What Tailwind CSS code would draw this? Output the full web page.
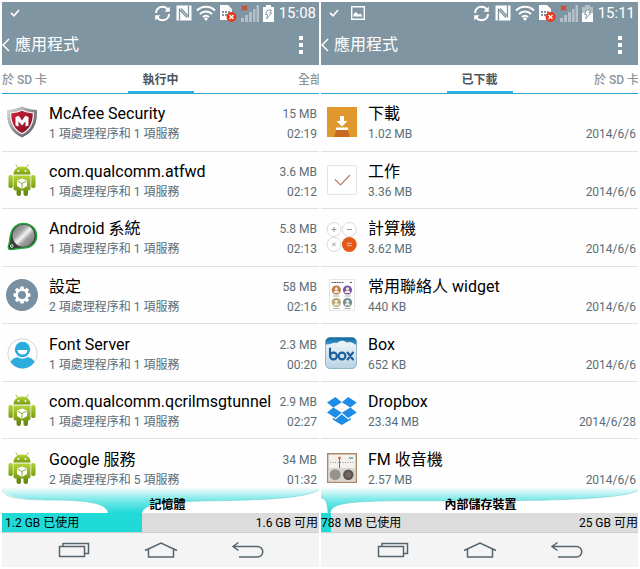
<!DOCTYPE html>
<html lang="zh-Hant">
<head>
<meta charset="utf-8">
<meta name="viewport" content="width=device-width, initial-scale=1">
<title>應用程式</title>
<script src="https://cdn.jsdelivr.net/npm/@tailwindcss/browser@4"></script>
</head>
<body class="bg-white font-[Roboto,'Noto_Sans_CJK_TC',sans-serif] text-black">

<svg class="absolute size-0" aria-hidden="true">
  <defs>
    <linearGradient id="gGreen" x1="0" y1="0" x2="0" y2="1"><stop offset="0" stop-color="#b5d438"/><stop offset="1" stop-color="#769c12"/></linearGradient>
    <linearGradient id="gSilver" x1="0" y1="0" x2="1" y2="1"><stop offset="0" stop-color="#e4e4e6"/><stop offset=".5" stop-color="#8a8b90"/><stop offset="1" stop-color="#55565b"/></linearGradient>
    <linearGradient id="gRed" x1="0" y1="0" x2="1" y2="1"><stop offset="0" stop-color="#d0213c"/><stop offset="1" stop-color="#7d0f22"/></linearGradient>
    <linearGradient id="gSteel" x1="0" y1="0" x2="1" y2="1"><stop offset="0" stop-color="#6c6c6c"/><stop offset=".35" stop-color="#a6a6a6"/><stop offset=".5" stop-color="#f4f4f4"/><stop offset=".65" stop-color="#a0a0a0"/><stop offset="1" stop-color="#6a6a6a"/></linearGradient>
    <linearGradient id="gBox" x1="0" y1="0" x2="0" y2="1"><stop offset="0" stop-color="#f4f9fc"/><stop offset="1" stop-color="#b9d3e3"/></linearGradient>
    <linearGradient id="gSky" x1="0" y1="0" x2="0" y2="1"><stop offset="0" stop-color="#12679f"/><stop offset="1" stop-color="#3c9dd0"/></linearGradient>
    <linearGradient id="gWave" x1="0" y1="0" x2="0" y2="1"><stop offset="0" stop-color="#20dad8" stop-opacity="0"/><stop offset=".5" stop-color="#20dad8" stop-opacity=".6"/><stop offset="1" stop-color="#20dad8"/></linearGradient>
  </defs>
  <symbol id="android" viewBox="0 0 32 32">
    <path d="M11.500 3.500 10 1M20.500 3.500 22 1" stroke="#9bbd2c" stroke-width="1" stroke-linecap="round"/>
    <path d="M7.500 10.500C7.500 5.500 11 2.500 16 2.500s8.500 3 8.500 8z" fill="url(#gGreen)"/>
    <circle cx="12.500" cy="7" r=".9" fill="#fff"/><circle cx="19.500" cy="7" r=".9" fill="#fff"/>
    <rect x="10.500" y="23" width="4.500" height="9" rx="2" fill="#6b8a16"/><rect x="17.500" y="23" width="4.500" height="9" rx="2" fill="#6b8a16"/>
    <rect x="2.500" y="11" width="4.300" height="13" rx="1.800" fill="url(#gGreen)"/><rect x="25.200" y="11" width="4.300" height="13" rx="1.800" fill="url(#gGreen)"/>
    <path d="M7.500 11.500h17V24.500a2 2 0 0 1-2 2h-13a2 2 0 0 1-2-2z" fill="url(#gGreen)"/>
    <path d="M16 14.500l5 2v5.500l-5 3-5-3v-5.500z" fill="#fff"/>
    <path d="M11.500 17 16 19.500l4.500-2.500M16 19.500v5" stroke="#8aa637" fill="none"/>
  </symbol>
  <symbol id="sync" viewBox="0 0 17 17">
    <path d="M2 8C2 4 5 1.800 8.500 1.800c2.300 0 4 1 5.100 2.600M15 9c0 4-3 6.200-6.500 6.200-2.300 0-4-1-5.100-2.600" fill="none" stroke="#fff" stroke-width="2"/>
    <path d="M15.800 1.500v5.300h-5.300zM1.200 15.500v-5.300h5.300z" fill="#fff"/>
  </symbol>
  <symbol id="nfc" viewBox="0 0 16 16">
    <path d="M.5.500h15v15H.5z" fill="#fff"/>
    <path d="M3.500 15.500V4.500l7.500 8M12.500.500v11L5 3.500" fill="none" stroke="#8095a2" stroke-width="1.300"/>
  </symbol>
  <symbol id="wifi" viewBox="0 0 20 16">
    <path d="M1 5.500c5-5 13-5 18 0M4 9c3.300-3.400 8.700-3.400 12 0M7 12c1.700-1.800 4.300-1.800 6 0" fill="none" stroke="#fff" stroke-width="2"/>
    <path d="M8 13.500a2.800 2.800 0 0 1 4 0L10 16z" fill="#fff"/>
  </symbol>
  <symbol id="sim" viewBox="0 0 17 18">
    <path d="M0 1h8l4 4v11H0z" fill="#fff"/>
    <path d="M2 7h2v2H2zM5 7h2v2H5zM8 7h2v2H8zM2 10h2v2H2zM5 10h2v2H5z" fill="#8095a2"/>
    <circle cx="11.500" cy="13" r="5" fill="#e8381c"/><path d="m9.500 11 4 4m0-4-4 4" stroke="#fff" stroke-width="1.400"/>
  </symbol>
  <symbol id="signal" viewBox="0 0 18 17">
    <path d="M0 13h3v4H0zM4 10h3v7H4zM8 7h3v10H8zM12 4h2.500v13H12zM15.500 0H18v17h-2.500z" fill="#b4c0c8"/>
    <path d="m1 .8 5 4.400M6 .8 1 5.200" stroke="#e33a20" stroke-width="1.600"/>
  </symbol>
  <symbol id="battery" viewBox="0 0 11 17">
    <path d="M3 0h5v2h3v15H0V2h3z" fill="#fff"/>
    <path d="M4.500 5h4L6.800 8h2L3.500 14l1.200-4.500H2.500z" fill="none" stroke="#8095a2" stroke-width=".9"/>
  </symbol>
  <symbol id="battery-low" viewBox="0 0 11 17">
    <path d="M3 0h5v2h3v6H0V2h3z" fill="#b4c0c8"/><path d="M0 8h11v9H0z" fill="#fff"/>
    <path d="M4.500 5h4L6.800 8h2L3.500 14l1.200-4.500H2.500z" fill="#fff" stroke="#8095a2" stroke-width=".9"/>
  </symbol>
  <symbol id="tick" viewBox="0 0 10 10"><path d="m1 4.800 3 3L9 2" fill="none" stroke="#fff" stroke-width="1.700"/></symbol>
  <symbol id="back-chevron" viewBox="0 0 8 14"><path d="M7 1 1 7l6 6" fill="none" stroke="#fff" stroke-width="1.500"/></symbol>
  <symbol id="kebab" viewBox="0 0 4 18"><path d="M0 0h4v4H0zM0 7h4v4H0zM0 14h4v4H0z" fill="#fff"/></symbol>
  <symbol id="nav-recent" viewBox="0 0 34 18"><path d="M2.500 5.500h25v10h-25zM6 5.500v-3h25.500v10H28" fill="none" stroke="#55646d" stroke-width="1.500"/></symbol>
  <symbol id="nav-home" viewBox="0 0 34 18"><path d="M1 9.500 17 2l16 7.500M4.500 8v8h25V8" fill="none" stroke="#55646d" stroke-width="1.500"/></symbol>
  <symbol id="nav-back" viewBox="0 0 34 18"><path d="M7.500 1.500 2 5.500l5.500 4M2 5.500h24.500a5.250 5.250 0 0 1 0 10.500H8" fill="none" stroke="#55646d" stroke-width="1.500"/></symbol>
</svg>

<div class="grid min-h-screen grid-cols-2 gap-[2px] p-[2px]">

  <!-- Running apps -->
  <section class="flex min-w-0 flex-col overflow-hidden" aria-label="執行中">
    <header class="bg-[#8095a2] text-white">
      <div class="flex h-[22px] items-center gap-1 pr-[3px] pl-2">
        <svg class="size-[10px]"><use href="#tick"/></svg>
        <svg class="ml-auto size-[17px]"><use href="#sync"/></svg>
        <svg class="ml-px size-4"><use href="#nfc"/></svg>
        <svg class="h-4 w-5"><use href="#wifi"/></svg>
        <svg class="h-[18px] w-[17px]"><use href="#sim"/></svg>
        <svg class="h-[17px] w-[18px]"><use href="#signal"/></svg>
        <svg class="h-[17px] w-[11px]"><use href="#battery"/></svg>
        <time class="ml-px text-[15px] leading-5">15:08</time>
      </div>
      <div class="flex h-[41px] items-center justify-between pr-4">
        <button class="flex items-center gap-[5px]" type="button">
          <svg class="h-[14px] w-2"><use href="#back-chevron"/></svg>
          <h1 class="text-base leading-6">應用程式</h1>
        </button>
        <button type="button" aria-label="更多"><svg class="h-[18px] w-1"><use href="#kebab"/></svg></button>
      </div>
    </header>
    <nav class="grid h-[29px] grid-cols-[1fr_66px_1fr] border-b border-[#2fa8d5] text-xs font-medium text-[#8b9499]">
      <a href="#" class="flex items-center pt-[2px] whitespace-nowrap">於 SD 卡</a>
      <a href="#" class="flex items-center justify-center border-b-2 border-[#2cb0e4] pt-1 font-bold text-[#4a5860]" aria-current="page">執行中</a>
      <a href="#" class="flex w-[21px] items-center justify-self-end overflow-hidden pt-[2px] whitespace-nowrap"><span>全部</span></a>
    </nav>

    <ul class="grid flex-1 auto-rows-fr divide-y divide-[#dfe1e2] bg-[#fefefe]">
      <li class="flex items-center gap-[11px] pr-[2px] pl-1">
        <svg class="size-8 shrink-0" viewBox="0 0 32 32">
          <path d="M1 4C7 3.500 12 2.500 16 .5c4 2 9 3 15 3.500.5 13-3 22-15 27.500C4 26 .5 17 1 4z" fill="url(#gSilver)"/>
          <path d="M4 6.500c5-.5 8.500-1.500 12-3 3.500 1.500 7 2.500 12 3 0 10-2.500 17.500-12 22C6.500 24 4 16.500 4 6.500z" fill="#f0f0f2"/>
          <path d="M5.200 7.500c4.500-.5 7.800-1.400 10.800-2.700 3 1.300 6.300 2.200 10.800 2.700-.3 9-2.800 15.500-10.800 19.500-8-4-10.500-10.500-10.800-19.500z" fill="url(#gRed)"/>
          <path d="M9.500 19.500V11l3.200-1.200L16 14.500l3.300-4.700 3.200 1.200v8.500l-3 1v-5.300L16 19.500l-3.500-4.300v5.300z" fill="#fff"/>
        </svg>
        <div class="min-w-0 flex-1 pt-[2px]">
          <div class="flex justify-between"><h2 class="text-base leading-[22px] whitespace-nowrap">McAfee Security</h2><span class="text-xs leading-[22px] whitespace-nowrap text-[#5c6d77]">15 MB</span></div>
          <div class="flex justify-between text-xs leading-[18px] text-[#5c6d77]"><p>1 項處理程序和 1 項服務</p><time>02:19</time></div>
        </div>
      </li>
      <li class="flex items-center gap-[11px] pr-[2px] pl-1">
        <svg class="size-8 shrink-0"><use href="#android"/></svg>
        <div class="min-w-0 flex-1 pt-[2px]">
          <div class="flex justify-between"><h2 class="text-base leading-[22px] whitespace-nowrap">com.qualcomm.atfwd</h2><span class="text-xs leading-[22px] whitespace-nowrap text-[#5c6d77]">3.6 MB</span></div>
          <div class="flex justify-between text-xs leading-[18px] text-[#5c6d77]"><p>1 項處理程序和 1 項服務</p><time>02:12</time></div>
        </div>
      </li>
      <li class="flex items-center gap-[11px] pr-[2px] pl-1">
        <svg class="size-8 shrink-0" viewBox="0 0 32 32">
          <path d="M4.500 28.500C2 28.500 2 26 3 23.500c1-3 .8-6 1.500-9C6 7 11 2.500 17.500 2.500c7.500 0 13 5.500 13 12.500S25 27 17.500 27c-4.500 0-8.500 1.500-13 1.500z" fill="#3a3f3a" stroke="#22a53c" stroke-width="1.600"/>
          <circle cx="17.500" cy="14.700" r="11" fill="url(#gSteel)"/>
          <circle cx="5.800" cy="25" r="2.400" fill="#d5d8d5" stroke="#1f2a20"/><circle cx="5.800" cy="25" r=".7" fill="#222"/>
        </svg>
        <div class="min-w-0 flex-1 pt-[2px]">
          <div class="flex justify-between"><h2 class="text-base leading-[22px] whitespace-nowrap">Android 系統</h2><span class="text-xs leading-[22px] whitespace-nowrap text-[#5c6d77]">5.8 MB</span></div>
          <div class="flex justify-between text-xs leading-[18px] text-[#5c6d77]"><p>1 項處理程序和 1 項服務</p><time>02:13</time></div>
        </div>
      </li>
      <li class="flex items-center gap-[11px] pr-[2px] pl-1">
        <svg class="size-8 shrink-0" viewBox="0 0 32 32">
          <circle cx="16" cy="16" r="16" fill="#7890a1"/>
          <g fill="#fff"><circle cx="16" cy="16" r="6.600"/><path id="cog" d="M14.400 7.500h3.200l.6 4h-4.400zM14.400 24.500h3.200l.6-4h-4.400z"/><use href="#cog" transform="rotate(45 16 16)"/><use href="#cog" transform="rotate(90 16 16)"/><use href="#cog" transform="rotate(135 16 16)"/></g>
          <circle cx="16" cy="16" r="4" fill="#7890a1"/>
        </svg>
        <div class="min-w-0 flex-1 pt-[2px]">
          <div class="flex justify-between"><h2 class="text-base leading-[22px] whitespace-nowrap">設定</h2><span class="text-xs leading-[22px] whitespace-nowrap text-[#5c6d77]">58 MB</span></div>
          <div class="flex justify-between text-xs leading-[18px] text-[#5c6d77]"><p>2 項處理程序和 1 項服務</p><time>02:16</time></div>
        </div>
      </li>
      <li class="flex items-center gap-[11px] pr-[2px] pl-1">
        <svg class="size-8 shrink-0" viewBox="0 0 32 32">
          <circle cx="16.500" cy="16.500" r="14.700" fill="#fff" stroke="#d3d6d8"/>
          <path d="M4.500 25C6 21.500 10 19.800 16.500 19.800S27 21.500 28.500 25a14.400 14.400 0 0 1-24 0z" fill="#2bacdf"/>
          <circle cx="16.500" cy="12.700" r="9" fill="#fff"/><circle cx="16.500" cy="12.500" r="7.700" fill="#2bacdf"/>
          <path d="M11.500 13h10c-.3 3-2.300 4.500-5 4.500s-4.700-1.500-5-4.500z" fill="#fff"/>
        </svg>
        <div class="min-w-0 flex-1 pt-[2px]">
          <div class="flex justify-between"><h2 class="text-base leading-[22px] whitespace-nowrap">Font Server</h2><span class="text-xs leading-[22px] whitespace-nowrap text-[#5c6d77]">2.3 MB</span></div>
          <div class="flex justify-between text-xs leading-[18px] text-[#5c6d77]"><p>1 項處理程序和 1 項服務</p><time>00:20</time></div>
        </div>
      </li>
      <li class="flex items-center gap-[11px] pr-[2px] pl-1">
        <svg class="size-8 shrink-0"><use href="#android"/></svg>
        <div class="min-w-0 flex-1 pt-[2px]">
          <div class="flex justify-between"><h2 class="text-base leading-[22px] whitespace-nowrap">com.qualcomm.qcrilmsgtunnel</h2><span class="text-xs leading-[22px] whitespace-nowrap text-[#5c6d77]">2.9 MB</span></div>
          <div class="flex justify-between text-xs leading-[18px] text-[#5c6d77]"><p>1 項處理程序和 1 項服務</p><time>02:27</time></div>
        </div>
      </li>
      <li class="flex items-center gap-[11px] pr-[2px] pl-1">
        <svg class="size-8 shrink-0"><use href="#android"/></svg>
        <div class="min-w-0 flex-1 pt-[2px]">
          <div class="flex justify-between"><h2 class="text-base leading-[22px] whitespace-nowrap">Google 服務</h2><span class="text-xs leading-[22px] whitespace-nowrap text-[#5c6d77]">34 MB</span></div>
          <div class="flex justify-between text-xs leading-[18px] text-[#5c6d77]"><p>2 項處理程序和 5 項服務</p><time>01:32</time></div>
        </div>
      </li>
    </ul>

    <div class="relative">
      <svg class="absolute bottom-full left-0 h-[26px] w-full translate-y-4" viewBox="0 0 317 26" preserveAspectRatio="none" aria-hidden="true">
        <path d="M0 0C2 10 15 12 45 13c40 0 60 3 61 13h34c2-8 15-11 60-12 60-1 100-2 117-11V0z" fill="url(#gWave)"/>
        <path d="M0 3C4 11 15 12.500 45 13c40 0 60 3 61 13M140 26c2-8 15-11 60-12 60-1 100-2 117-11" fill="none" stroke="#7ccfcd" stroke-width=".6"/>
      </svg>
      <h3 class="relative pl-[14px] text-center text-xs leading-4 font-bold">記憶體</h3>
      <div class="bg-[#dcdcdc]" role="meter" aria-label="記憶體" aria-valuemin="0" aria-valuemax="100" aria-valuenow="44">
        <div class="flex h-[19px] items-center whitespace-nowrap bg-[#20dad8]" style="width:44.200%"><span class="pl-[3px] text-xs">1.2 GB 已使用</span></div>
        <div class="-mt-[19px] flex h-[19px] items-center justify-end pr-px text-xs">1.6 GB 可用</div>
      </div>
    </div>
    <footer class="flex h-[35px] items-center justify-center gap-[53px] border-t border-[#cfd0d1] bg-[#f4f4f4]">
      <button type="button" aria-label="最近"><svg class="h-[18px] w-[34px]"><use href="#nav-recent"/></svg></button>
      <button type="button" aria-label="主畫面"><svg class="h-[18px] w-[34px]"><use href="#nav-home"/></svg></button>
      <button type="button" aria-label="返回"><svg class="h-[18px] w-[34px]"><use href="#nav-back"/></svg></button>
    </footer>
  </section>

  <!-- Downloaded apps -->
  <section class="flex min-w-0 flex-col overflow-hidden" aria-label="已下載">
    <header class="bg-[#8095a2] text-white">
      <div class="flex h-[22px] items-center gap-1 pr-[3px] pl-2">
        <svg class="size-[10px]"><use href="#tick"/></svg>
        <svg class="ml-2 size-[14px]" viewBox="0 0 14 14"><path d="M.7.700h12.600v12.600H.7z" fill="none" stroke="#fff" stroke-width="1.400"/><path d="M2.500 10.500V8l2.500-2 2.500 2.500 2-1 2 3z" fill="#fff"/></svg>
        <svg class="ml-auto size-[17px]"><use href="#sync"/></svg>
        <svg class="ml-px size-4"><use href="#nfc"/></svg>
        <svg class="h-4 w-5"><use href="#wifi"/></svg>
        <svg class="h-[18px] w-[17px]"><use href="#sim"/></svg>
        <svg class="h-[17px] w-[18px]"><use href="#signal"/></svg>
        <svg class="h-[17px] w-[11px]"><use href="#battery-low"/></svg>
        <time class="ml-px text-[15px] leading-5">15:11</time>
      </div>
      <div class="flex h-[41px] items-center justify-between pr-4">
        <button class="flex items-center gap-[5px]" type="button">
          <svg class="h-[14px] w-2"><use href="#back-chevron"/></svg>
          <h1 class="text-base leading-6">應用程式</h1>
        </button>
        <button type="button" aria-label="更多"><svg class="h-[18px] w-1"><use href="#kebab"/></svg></button>
      </div>
    </header>
    <nav class="grid h-[29px] grid-cols-[1fr_66px_1fr] border-b border-[#2fa8d5] text-xs font-medium text-[#8b9499]">
      <a href="#" class="col-start-2 flex items-center justify-center border-b-2 border-[#2cb0e4] pt-1 font-bold text-[#4a5860]" aria-current="page">已下載</a>
      <a href="#" class="flex w-11 items-center justify-self-end overflow-hidden pt-[2px] whitespace-nowrap"><span>於 SD 卡</span></a>
    </nav>

    <ul class="grid flex-1 auto-rows-fr divide-y divide-[#dfe1e2] bg-[#fefefe]">
      <li class="flex items-center gap-[11px] pr-[2px] pl-1">
        <svg class="size-8 shrink-0" viewBox="0 0 32 32">
          <path d="M2 1h30v30H2z" fill="#e0972d"/><path d="M12 22h10l3 9H9z" fill="#c8691f"/><path d="M11 21.500h12V24H11z" fill="#fff"/><path d="M15 10h4v5h3.500L17 20.500 11.500 15H15z" fill="#fff"/>
        </svg>
        <div class="min-w-0 flex-1 pt-[2px]">
          <h2 class="text-base leading-[22px] whitespace-nowrap">下載</h2>
          <div class="flex justify-between text-xs leading-[18px] text-[#5c6d77]"><p>1.02 MB</p><time>2014/6/6</time></div>
        </div>
      </li>
      <li class="flex items-center gap-[11px] pr-[2px] pl-1">
        <svg class="size-8 shrink-0" viewBox="0 0 32 32">
          <path d="M2.500 1.500h29v29h-29z" fill="#fff" stroke="#e4e4e4"/><path d="m10 15.500 5.500 5.500L25 11" fill="none" stroke="#c07c60" stroke-width="1.200"/>
        </svg>
        <div class="min-w-0 flex-1 pt-[2px]">
          <h2 class="text-base leading-[22px] whitespace-nowrap">工作</h2>
          <div class="flex justify-between text-xs leading-[18px] text-[#5c6d77]"><p>3.36 MB</p><time>2014/6/6</time></div>
        </div>
      </li>
      <li class="flex items-center gap-[11px] pr-[2px] pl-1">
        <svg class="size-8 shrink-0" viewBox="0 0 32 32">
          <g fill="#fff" stroke="#d2d2d2" stroke-width=".8"><circle cx="9" cy="8.500" r="7"/><circle cx="24.300" cy="8.500" r="7"/><circle cx="9" cy="23.500" r="7"/></g>
          <circle cx="24.300" cy="23.500" r="7.400" fill="#e2591a"/>
          <path d="M6.500 8.500h5M9 6v5M21.800 8.500h5M7.200 21.700l3.600 3.600m0-3.600-3.600 3.600" stroke="#8c8c8c" stroke-width=".9"/>
          <path d="M21.800 22.300h5M21.800 24.700h5" stroke="#f7c9b0" stroke-width=".9"/>
        </svg>
        <div class="min-w-0 flex-1 pt-[2px]">
          <h2 class="text-base leading-[22px] whitespace-nowrap">計算機</h2>
          <div class="flex justify-between text-xs leading-[18px] text-[#5c6d77]"><p>3.62 MB</p><time>2014/6/6</time></div>
        </div>
      </li>
      <li class="flex items-center gap-[11px] pr-[2px] pl-1">
        <svg class="size-8 shrink-0" viewBox="0 0 32 32">
          <path d="M4.500.5h25v31h-25z" fill="#fff" stroke="#e6e6e6"/>
          <path d="M6.500 3.500h12M25 3.500h2" stroke="#555" stroke-width="1.200" stroke-dasharray="2 .6"/>
          <circle cx="11.300" cy="11" r="4.600" fill="#c07a45"/><circle cx="22.500" cy="11" r="4.600" fill="#7d58a8"/><circle cx="11.300" cy="23.500" r="4.600" fill="#b5a673"/><circle cx="22.500" cy="23.500" r="4.600" fill="#6f8c9c"/>
          <g id="faces" fill="#f5ead9"><circle cx="11.300" cy="9.800" r="1.600"/><path d="M8.500 14c0-3.200 5.600-3.200 5.600 0z"/><circle cx="22.500" cy="9.800" r="1.600"/><path d="M19.700 14c0-3.200 5.600-3.200 5.600 0z"/></g>
          <use href="#faces" y="12.500"/>
          <path d="M8 17h6.500M19.500 17H26M8 29.500h6.500M19.500 29.500H26" stroke="#999" stroke-width=".8"/>
        </svg>
        <div class="min-w-0 flex-1 pt-[2px]">
          <h2 class="text-base leading-[22px] whitespace-nowrap">常用聯絡人 widget</h2>
          <div class="flex justify-between text-xs leading-[18px] text-[#5c6d77]"><p>440 KB</p><time>2014/6/6</time></div>
        </div>
      </li>
      <li class="flex items-center gap-[11px] pr-[2px] pl-1">
        <svg class="size-8 shrink-0" viewBox="0 0 32 32">
          <rect x=".5" y=".5" width="31" height="31" rx="4.500" fill="url(#gBox)" stroke="#7ea9c4" stroke-width=".8"/>
          <path d="M.5 7.500V5A4.500 4.500 0 0 1 5 .5h22A4.500 4.500 0 0 1 31.500 5v3c-4-2-5.500-4-9.500-2.500-4-3-8-2-10 .5C8 5 5 8 .5 7.500z" fill="url(#gSky)"/>
          <g fill="none" stroke="#1d5f9c" stroke-width="2.100" stroke-linecap="round"><path d="M5 11.500V19"/><circle cx="8.500" cy="19" r="3.400"/><circle cx="17" cy="19" r="3.400"/><path d="m22.500 15.500 5.500 7M28 15.500l-5.500 7"/></g>
        </svg>
        <div class="min-w-0 flex-1 pt-[2px]">
          <h2 class="text-base leading-[22px] whitespace-nowrap">Box</h2>
          <div class="flex justify-between text-xs leading-[18px] text-[#5c6d77]"><p>652 KB</p><time>2014/6/6</time></div>
        </div>
      </li>
      <li class="flex items-center gap-[11px] pr-[2px] pl-1">
        <svg class="size-8 shrink-0" viewBox="0 0 32 32">
          <g fill="#1f8ce8"><path d="m10.500 3 6.300 5.200-8.500 5.300L2 8.500zM23.200 3l8.500 5.500-6.300 5-8.600-5.300zM2 18.500l6.300-5 8.500 5.300-6.300 5.200zM31.700 18.500l-6.300-5-8.600 5.300 6.400 5.200z"/><path d="m16.800 20.300 6.400 5.200 2.600-1.700v2L16.800 31l-8.900-5.200v-2l2.600 1.700z"/></g>
        </svg>
        <div class="min-w-0 flex-1 pt-[2px]">
          <h2 class="text-base leading-[22px] whitespace-nowrap">Dropbox</h2>
          <div class="flex justify-between text-xs leading-[18px] text-[#5c6d77]"><p>23.34 MB</p><time>2014/6/28</time></div>
        </div>
      </li>
      <li class="flex items-center gap-[11px] pr-[2px] pl-1">
        <svg class="size-8 shrink-0" viewBox="0 0 32 32">
          <path d="M2.700 1.700h28.600v28.600H2.700z" fill="#f3f1ee" stroke="#a88b64" stroke-width="1.400"/>
          <path d="M3.500 16h27v13.500h-27z" fill="#d9d6d2"/>
          <path d="M5 10.500h24" stroke="#999" stroke-width="1" stroke-dasharray="1 1.500"/><path d="M14.500 5v11" stroke="#c9543c" stroke-width="1"/><circle cx="14.500" cy="6" r="1.300" fill="#d8573c"/><path d="M24 6h4" stroke="#55a6a0" stroke-width="1.500"/>
          <circle cx="10.200" cy="22.700" r="5.500" fill="#96928f"/><circle cx="23.300" cy="22.700" r="5.200" fill="#5d5450"/><circle cx="23.300" cy="22.700" r="3" fill="#736964"/>
        </svg>
        <div class="min-w-0 flex-1 pt-[2px]">
          <h2 class="text-base leading-[22px] whitespace-nowrap">FM 收音機</h2>
          <div class="flex justify-between text-xs leading-[18px] text-[#5c6d77]"><p>2.57 MB</p><time>2014/6/6</time></div>
        </div>
      </li>
    </ul>

    <div class="relative">
      <svg class="absolute bottom-full left-0 h-[26px] w-full translate-y-4" viewBox="0 0 317 26" preserveAspectRatio="none" aria-hidden="true">
        <path d="M0 0v11c4 1 6 2 7 15h2c2-8 11-11 51-12 70-1 240 3 257-11V0z" fill="url(#gWave)"/>
        <path d="M0 11c4 1 6 2 7 15M9 26c2-8 11-11 51-12 70-1 240 3 257-11" fill="none" stroke="#7ccfcd" stroke-width=".6"/>
      </svg>
      <h3 class="relative pl-[2px] text-center text-xs leading-4 font-bold">內部儲存裝置</h3>
      <div class="bg-[#dcdcdc]" role="meter" aria-label="內部儲存裝置" aria-valuemin="0" aria-valuemax="100" aria-valuenow="3">
        <div class="flex h-[19px] items-center whitespace-nowrap bg-[#20dad8]" style="width:3%"><span class="text-xs">788 MB 已使用</span></div>
        <div class="-mt-[19px] flex h-[19px] items-center justify-end text-xs">25 GB 可用</div>
      </div>
    </div>
    <footer class="flex h-[35px] items-center justify-center gap-[53px] border-t border-[#cfd0d1] bg-[#f4f4f4]">
      <button type="button" aria-label="最近"><svg class="h-[18px] w-[34px]"><use href="#nav-recent"/></svg></button>
      <button type="button" aria-label="主畫面"><svg class="h-[18px] w-[34px]"><use href="#nav-home"/></svg></button>
      <button type="button" aria-label="返回"><svg class="h-[18px] w-[34px]"><use href="#nav-back"/></svg></button>
    </footer>
  </section>
</div>
</body>
</html>
